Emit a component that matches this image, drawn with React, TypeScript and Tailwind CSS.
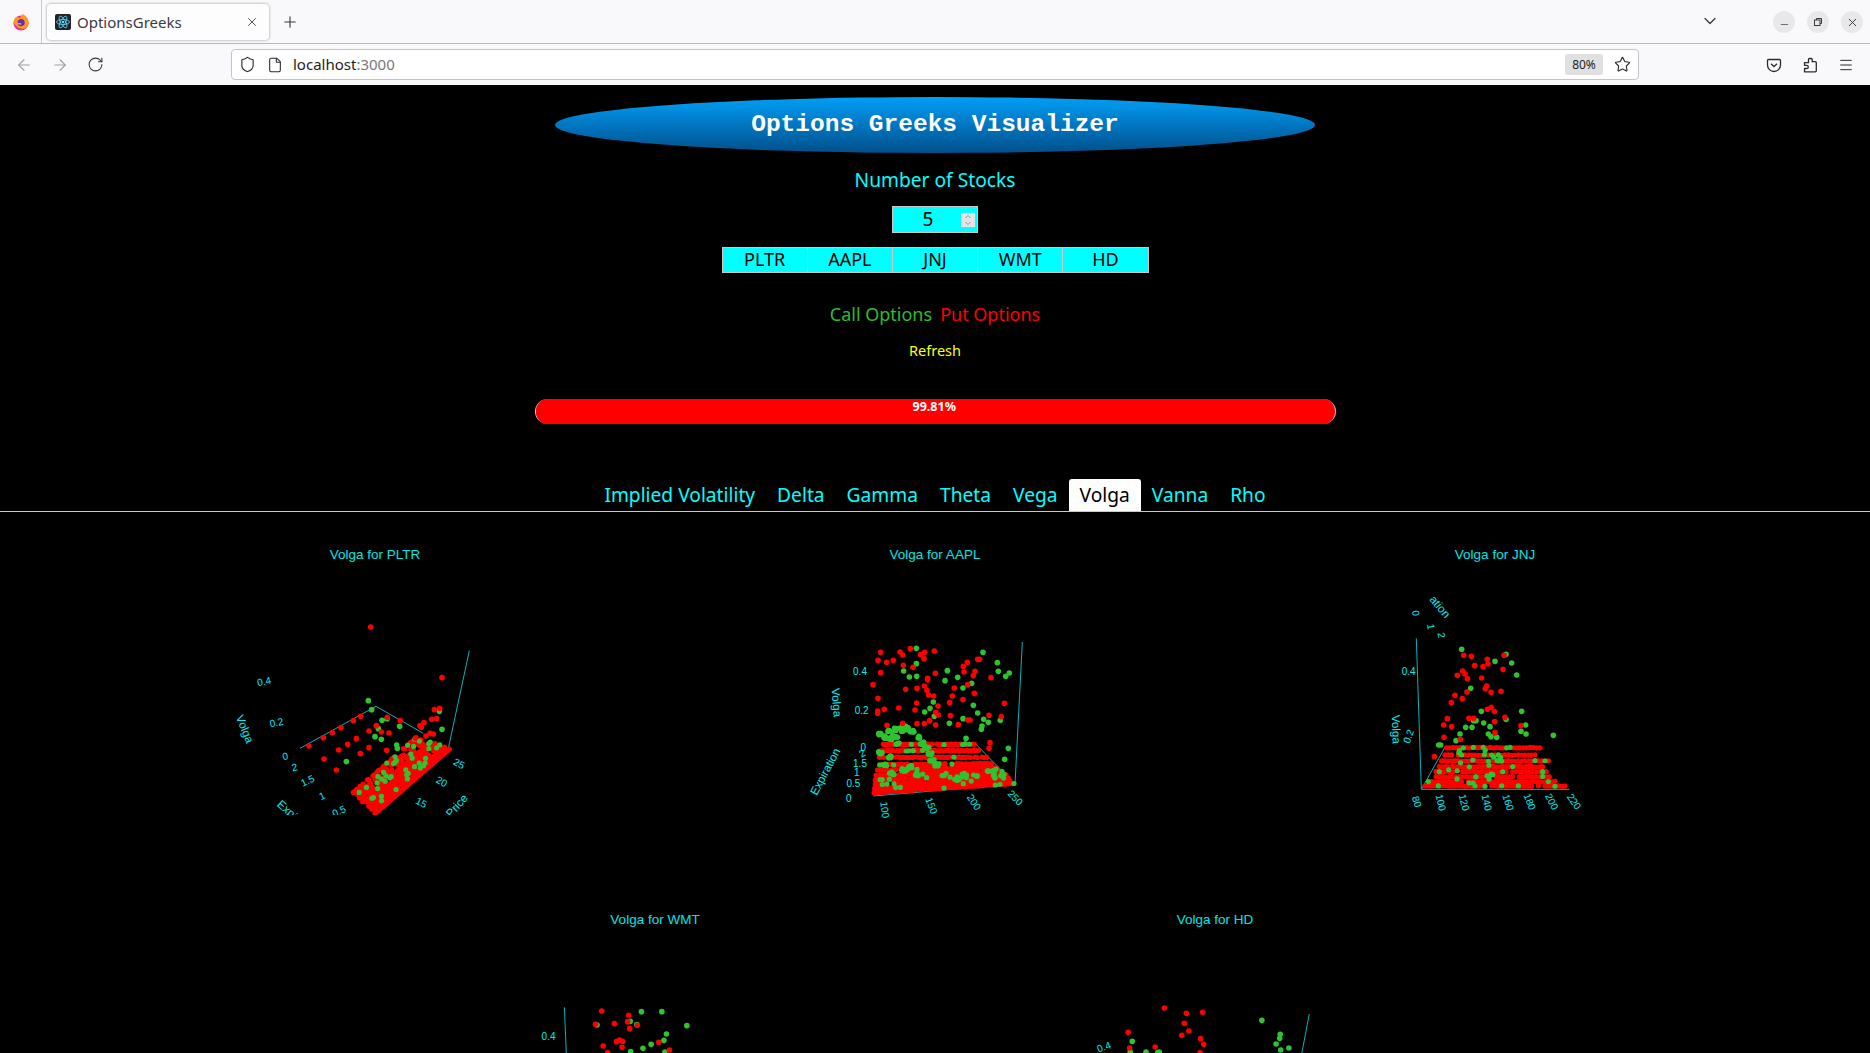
import React from "react";
import {
  ArrowLeft,
  ArrowRight,
  ChevronDown,
  File,
  Menu,
  Minus,
  Plus,
  RotateCw,
  Shield,
  Star,
  X,
} from "lucide-react";

type Pt = [number, number];
type Label = { text: string; x: number; y: number; r?: number; size?: number };

interface ChartDef {
  title: string;
  ox: number;
  oy: number;
  sx: number;
  sy: number;
  clipY?: number;
  lines: Pt[][];
  labels: Label[];
  under: { red: Pt[]; green: Pt[] };
  red: Pt[];
  green: Pt[];
}

const RED = "#ff0000";
const GREEN = "#2fc42f";
const AXIS = "#0bb0b5";
const PROGRESS = 99.81;

const mulberry = (seed: number) => () => {
  seed |= 0;
  seed = (seed + 0x6d2b79f5) | 0;
  let t = Math.imul(seed ^ (seed >>> 15), 1 | seed);
  t = (t + Math.imul(t ^ (t >>> 7), 61 | t)) ^ t;
  return ((t ^ (t >>> 14)) >>> 0) / 4294967296;
};

// diagonal rows for the PLTR cloud
const pltrCloud = () => {
  const rnd = mulberry(7);
  const red: Pt[] = [];
  const green: Pt[] = [];
  for (let k = 0; k <= 7; k++) {
    for (let t = 0; t <= 1; t += 0.022) {
      if (k > 0 && rnd() < 0.08 + k * 0.05) continue;
      const dx = (-65 - 35 * t) * (k / 7);
      const dy = (-60 + 30 * t) * (k / 7);
      const p: Pt = [465 + 225 * t + dx, 610 - 195 * t + dy - rnd() * (k ? 4 : 0)];
      if (k > 0 && rnd() < 0.1 + 0.14 * t) green.push(p);
      else red.push(p);
    }
  }
  return { red, green };
};

// rows are [y at x0, x0, x1, slope]
const rowCloud = (seed: number, rows: number[][], greenShare: number, step: number) => {
  const rnd = mulberry(seed);
  const red: Pt[] = [];
  const green: Pt[] = [];
  rows.forEach(([y, x0, x1, slope = 0]) => {
    for (let x = x0; x <= x1; x += step) {
      if (rnd() < 0.06) continue;
      const p: Pt = [x, y + (x - x0) * slope + (rnd() - 0.5) * 2];
      if (rnd() < greenShare) green.push(p);
      else red.push(p);
    }
  });
  return { red, green };
};

const aaplCloud = () => {
  const base = rowCloud(
    11,
    [
      [488, 252, 672, -0.066],
      [476, 254, 664, -0.058],
      [464, 256, 655, -0.05],
      [450, 256, 648, -0.04],
      [436, 258, 638, -0.03],
      [420, 262, 625, -0.02],
      [404, 262, 605, -0.01],
      [382, 268, 590, 0],
      [362, 272, 572, 0],
      [343, 280, 556, 0],
    ],
    0.06,
    7,
  );
  const rnd = mulberry(3);
  const arc: Pt[] = [
    [270, 314], [285, 322], [300, 326], [318, 320], [335, 300], [350, 296], [366, 304], [382, 320],
    [396, 340], [410, 352], [420, 372], [426, 392], [440, 405], [300, 304], [320, 297], [342, 292],
    [270, 368], [300, 380], [322, 340], [340, 420], [360, 410], [380, 435], [305, 430], [285, 405],
  ];
  arc.forEach(([x, y]) => {
    for (let i = 0; i < 6; i++) base.green.push([x + (rnd() - 0.5) * 14, y + (rnd() - 0.5) * 9]);
  });
  for (let i = 0; i < 16; i++) base.green.push([590 + rnd() * 55, 412 + rnd() * 32]);
  for (let i = 0; i < 14; i++) base.green.push([450 + rnd() * 130, 430 + rnd() * 25]);
  return base;
};

const jnjCloud = () => {
  const base = rowCloud(
    21,
    [
      [588, 135, 558],
      [575, 145, 530],
      [560, 158, 515],
      [545, 168, 505],
      [530, 178, 495],
      [513, 185, 510],
      [495, 195, 470],
      [473, 200, 480],
    ],
    0.13,
    10,
  );
  const rnd = mulberry(5);
  for (let i = 0; i < 22; i++) base.green.push([190 + rnd() * 190, 480 + rnd() * 100]);
  return base;
};

const charts: ChartDef[] = [
  {
    title: "Volga for PLTR",
    ox: 220,
    oy: 610,
    sx: 3,
    sy: 3,
    clipY: 815,
    lines: [
      [[240, 415], [468, 289], [610, 370]],
      [[685, 415], [748, 122]],
    ],
    labels: [
      { text: "0.4", x: 133, y: 217, r: -12 },
      { text: "0.2", x: 170, y: 340, r: -12 },
      { text: "Volga", x: 72, y: 358, r: 68, size: 11.5 },
      { text: "0", x: 196, y: 441, r: -12 },
      { text: "2", x: 224, y: 474, r: -12 },
      { text: "1.5", x: 264, y: 514, r: -25 },
      { text: "1", x: 307, y: 560, r: -25 },
      { text: "0.5", x: 358, y: 606, r: -25 },
      { text: "Expiration", x: 232, y: 630, r: 42, size: 11.5 },
      { text: "25", x: 716, y: 463, r: 28 },
      { text: "20", x: 664, y: 517, r: 28 },
      { text: "15", x: 603, y: 580, r: 28 },
      { text: "Strike Price", x: 680, y: 625, r: -48, size: 11.5 },
    ],
    under: pltrCloud(),
    red: [
      [452, 51], [666, 203], [267, 408], [310, 383], [337, 368], [363, 353], [400, 332], [422, 319], [502, 322],
      [541, 332], [469, 347], [484, 366], [507, 369], [447, 363], [409, 386], [383, 403], [356, 420], [312, 447],
      [349, 480], [421, 431], [447, 413], [500, 421], [643, 299], [659, 295], [635, 328], [650, 326], [612, 338],
      [600, 347], [604, 352], [586, 385], [618, 378], [630, 370], [640, 372],
    ],
    green: [
      [445, 272], [455, 299], [486, 331], [501, 327], [475, 356], [465, 380], [484, 388], [539, 349], [666, 358],
      [658, 304], [379, 455], [530, 405], [532, 415],
    ],
  },
  {
    title: "Volga for AAPL",
    ox: 790,
    oy: 630,
    sx: 3,
    sy: 3,
    lines: [
      [[250, 498], [675, 462], [555, 340]],
      [[675, 462], [697, 36]],
    ],
    labels: [
      { text: "0.4", x: 210, y: 128 },
      { text: "0.2", x: 215, y: 244 },
      { text: "Volga", x: 137, y: 218, r: 85, size: 11.5 },
      { text: "0", x: 220, y: 355 },
      { text: "2", x: 218, y: 372, r: -30 },
      { text: "1.5", x: 210, y: 402 },
      { text: "1", x: 200, y: 431 },
      { text: "0.5", x: 190, y: 464 },
      { text: "0", x: 176, y: 507 },
      { text: "Expiration", x: 108, y: 426, r: -62, size: 11.5 },
      { text: "100", x: 282, y: 540, r: 82 },
      { text: "150", x: 422, y: 528, r: 70 },
      { text: "200", x: 550, y: 518, r: 55 },
      { text: "250", x: 674, y: 505, r: 45 },
    ],
    under: aaplCloud(),
    red: [
      [272, 67], [330, 66], [338, 75], [361, 56], [392, 74], [404, 67], [433, 63], [402, 86], [264, 91], [290, 97],
      [310, 91], [340, 106], [369, 112], [272, 128], [249, 164], [347, 178], [381, 175], [403, 168], [411, 181],
      [416, 195], [413, 145], [413, 150], [436, 130], [264, 205], [380, 219], [431, 198], [444, 228], [263, 243],
      [263, 250], [283, 238], [326, 234], [375, 240], [437, 247], [445, 255], [419, 272], [403, 281], [437, 285],
      [291, 286], [338, 280], [381, 281], [505, 284], [481, 257], [533, 270], [540, 270], [479, 218], [487, 198],
      [493, 174], [533, 164], [553, 190], [519, 209], [643, 220], [597, 256], [634, 260], [532, 97], [520, 109],
      [522, 126], [555, 124], [550, 137], [563, 88], [569, 88], [603, 143], [600, 338], [597, 355],
    ],
    green: [
      [379, 55], [579, 67], [622, 98], [625, 124], [658, 129], [647, 139], [379, 101], [341, 123], [358, 141],
      [380, 139], [472, 122], [465, 152], [503, 142], [545, 160], [519, 174], [550, 226], [430, 216], [420, 235],
      [404, 246], [433, 259], [519, 266], [478, 280], [563, 249], [581, 268], [595, 277], [631, 271], [576, 288],
      [574, 298], [655, 355], [644, 388], [528, 325], [525, 342],
    ],
  },
  {
    title: "Volga for JNJ",
    ox: 1380,
    oy: 590,
    sx: 3,
    sy: 3,
    lines: [
      [[568, 598], [124, 598], [195, 472], [480, 472]],
      [[124, 598], [109, 145]],
    ],
    labels: [
      { text: "0", x: 105, y: 70, r: 80 },
      { text: "1", x: 150, y: 110, r: 80 },
      { text: "2", x: 182, y: 136, r: 80 },
      { text: "ation", x: 178, y: 52, r: 50, size: 11.5 },
      { text: "0.4", x: 86, y: 246 },
      { text: "0.2", x: 88, y: 440, r: -70 },
      { text: "Volga", x: 46, y: 418, r: 88, size: 11.5 },
      { text: "80", x: 108, y: 636, r: 72 },
      { text: "100", x: 180, y: 638, r: 76 },
      { text: "120", x: 250, y: 638, r: 76 },
      { text: "140", x: 318, y: 638, r: 76 },
      { text: "160", x: 382, y: 638, r: 72 },
      { text: "180", x: 447, y: 636, r: 68 },
      { text: "200", x: 513, y: 636, r: 62 },
      { text: "220", x: 580, y: 636, r: 55 },
    ],
    under: jnjCloud(),
    red: [
      [251, 196], [274, 199], [322, 208], [324, 222], [309, 230], [284, 227], [372, 196], [369, 238], [248, 243],
      [255, 252], [232, 256], [262, 266], [305, 264], [320, 288], [316, 296], [333, 307], [363, 304], [261, 306],
      [225, 316], [247, 326], [214, 338], [334, 352], [322, 358], [343, 364], [202, 386], [267, 385], [281, 385],
      [375, 382], [191, 405], [215, 410], [344, 395], [423, 407], [192, 442], [241, 448], [345, 428], [163, 500],
    ],
    green: [
      [245, 178], [378, 193], [345, 214], [395, 219], [410, 255], [272, 295], [304, 364], [425, 364], [378, 388],
      [437, 405], [423, 424], [438, 432], [520, 436], [281, 392], [288, 392], [276, 412], [257, 412], [311, 399],
      [330, 410], [325, 432], [240, 432], [228, 452], [176, 465], [182, 465], [333, 440], [350, 442],
    ],
  },
  {
    title: "Volga for WMT",
    ox: 520,
    oy: 900,
    sx: 1.96,
    sy: 3,
    lines: [[[87, 322], [91, 470]]],
    labels: [{ text: "0.4", x: 56, y: 413 }],
    under: { red: [], green: [] },
    red: [
      [160, 333], [213, 346], [148, 373], [185, 371], [211, 365], [230, 376], [215, 386], [195, 420], [189, 425],
      [201, 424], [163, 438], [200, 442], [272, 427], [293, 450], [172, 458],
    ],
    green: [
      [238, 335], [278, 335], [216, 364], [229, 374], [151, 375], [327, 377], [287, 402], [282, 421], [257, 433],
      [241, 445], [217, 455], [284, 456],
    ],
  },
  {
    title: "Volga for HD",
    ox: 520,
    oy: 900,
    sx: 1.96,
    sy: 3,
    lines: [[[1547, 342], [1531, 470]]],
    labels: [{ text: "0.4", x: 1145, y: 443, r: -20 }],
    under: { red: [], green: [] },
    red: [
      [1263, 324], [1306, 340], [1338, 337], [1302, 370], [1192, 397], [1311, 393], [1297, 406], [1334, 416],
      [1340, 433], [1195, 444], [1245, 441], [1333, 458],
    ],
    green: [
      [1454, 361], [1200, 424], [1490, 403], [1489, 415], [1482, 432], [1507, 444], [1491, 450], [1196, 456],
      [1227, 456], [1253, 456], [1250, 458],
    ],
  },
];

// top left corner of each card on the page, used to place the traced points
const cardOrigins: Pt[] = [
  [95, 535],
  [655, 535],
  [1215, 535],
  [375, 900],
  [935, 900],
];

const Dots: React.FC<{ pts: Pt[]; fill: string; map: (p: Pt) => Pt; r: number }> = ({ pts, fill, map, r }) => (
  <g fill={fill}>
    {pts.map((p, i) => {
      const [cx, cy] = map(p);
      return <circle key={i} cx={cx} cy={cy} r={r} />;
    })}
  </g>
);

const Chart: React.FC<{ chart: ChartDef; origin: Pt; index: number }> = ({ chart, origin, index }) => {
  const map = ([x, y]: Pt): Pt => [chart.ox + x / chart.sx - origin[0], chart.oy + y / chart.sy - origin[1]];
  const clipId = `plot-clip-${index}`;
  return (
    <div className="h-[365px] w-[560px] shrink-0">
      <svg width={560} height={365} className="block">
        <defs>
          <clipPath id={clipId}>
            <rect x={0} y={0} width={560} height={chart.clipY ? chart.clipY - origin[1] : 365} />
          </clipPath>
        </defs>
        <text
          x={280}
          y={24}
          textAnchor="middle"
          fill="#00e5e5"
          fontSize={13.5}
          fontFamily="'Liberation Sans', sans-serif"
        >
          {chart.title}
        </text>
        <g clipPath={`url(#${clipId})`}>
          {chart.lines.map((line, i) => (
            <polyline
              key={i}
              points={line.map((p) => map(p).join(",")).join(" ")}
              fill="none"
              stroke={AXIS}
              strokeWidth={1}
            />
          ))}
          {chart.labels.map((l, i) => {
            const [x, y] = map([l.x, l.y]);
            return (
              <text
                key={i}
                x={x}
                y={y}
                textAnchor="middle"
                dominantBaseline="middle"
                fill="#00f0f0"
                fontSize={l.size ?? 10}
                fontFamily="'Liberation Sans', sans-serif"
                transform={l.r ? `rotate(${l.r} ${x} ${y})` : undefined}
              >
                {l.text}
              </text>
            );
          })}
          <Dots pts={chart.under.red} fill={RED} map={map} r={2.6} />
          <Dots pts={chart.under.green} fill={GREEN} map={map} r={2.6} />
          <Dots pts={chart.green} fill={GREEN} map={map} r={2.8} />
          <Dots pts={chart.red} fill={RED} map={map} r={2.8} />
        </g>
      </svg>
    </div>
  );
};

const FirefoxLogo = () => (
  <svg width="18" height="18" viewBox="0 0 18 18">
    <circle cx="9" cy="10" r="7.6" fill="#e0399a" />
    <path d="M1.6 9.5C2 5 5 3 6.5 3 6 4 6.2 5 7 5.5 8.5 4 10 3 10.5 1c3.5 1.6 6.2 4.6 6.2 8.6 0 2-1 4-2.6 5.4-2 1.2-7 1-9-1.5C3 12 2 11 1.6 9.5z" fill="#ff9a1f" />
    <path d="M5.5 9.5c0-2 1.6-3.4 3.6-3.4 2.2 0 3.7 1.6 3.7 3.6s-1.6 3.6-3.7 3.6c-1.6 0-3-.9-3.4-2.3 1 .8 2.6 1 3.4.4.6-.5.3-1.2-.4-1.3-1-.1-2 .2-3.2-.6z" fill="#6a2bc4" />
  </svg>
);

const ReactFavicon = () => (
  <svg width="16" height="16" viewBox="0 0 16 16" className="shrink-0">
    <rect width="16" height="16" rx="2" fill="#20232a" />
    <g fill="none" stroke="#61dafb" strokeWidth="0.8">
      <ellipse cx="8" cy="8" rx="6.5" ry="2.5" />
      <ellipse cx="8" cy="8" rx="6.5" ry="2.5" transform="rotate(60 8 8)" />
      <ellipse cx="8" cy="8" rx="6.5" ry="2.5" transform="rotate(120 8 8)" />
    </g>
    <circle cx="8" cy="8" r="1.3" fill="#61dafb" />
  </svg>
);

const WindowButton: React.FC<{ children: React.ReactNode }> = ({ children }) => (
  <div className="flex h-[22px] w-[22px] items-center justify-center rounded-full bg-[#e8e8ea] text-[#3a3a3c]">
    {children}
  </div>
);

const TabBar = () => (
  <div className="flex h-[44px] shrink-0 items-start border-b border-[#b8b8ba] bg-[#f9f9fb]">
    <div className="flex h-[43px] w-[42px] items-center justify-center border-r border-[#c8c8ca]">
      <FirefoxLogo />
    </div>
    <div className="mt-[4px] ml-[5px] flex h-[36px] w-[222px] items-center rounded-[4px] bg-[#fdfdfd] pr-[10px] pl-[8px] shadow-[0_0_3px_rgba(0,0,0,0.4)]">
      <ReactFavicon />
      <span className="ml-[6px] flex-1 text-[15px] text-[#3a3a44] [font-family:'Noto_Sans',sans-serif]">OptionsGreeks</span>
      <X size={14} strokeWidth={1.5} className="text-[#3a3a44]" />
    </div>
    <div className="mt-[13px] ml-[12px]">
      <Plus size={18} strokeWidth={1.5} className="text-[#3a3a44]" />
    </div>
    <div className="mt-[11px] ml-auto">
      <ChevronDown size={20} strokeWidth={1.5} className="text-[#3a3a44]" />
    </div>
    <div className="mt-[11px] mr-[7px] ml-[53px] flex gap-[12px]">
      <WindowButton>
        <Minus size={11} strokeWidth={1.5} className="mt-[5px]" />
      </WindowButton>
      <WindowButton>
        <svg width="10" height="10" viewBox="0 0 10 10" fill="none" stroke="currentColor" strokeWidth="1">
          <rect x="1.5" y="3" width="5.5" height="5.5" />
          <path d="M3.5 3V1.5H8.5V6.5H7" />
        </svg>
      </WindowButton>
      <WindowButton>
        <X size={13} strokeWidth={1.8} />
      </WindowButton>
    </div>
  </div>
);

const Toolbar = () => (
  <div className="flex h-[41px] shrink-0 items-center bg-[#f9f9fb]">
    <div className="flex items-center gap-[18px] pl-[15px]">
      <ArrowLeft size={18} strokeWidth={1.5} className="text-[#a0a0a6]" />
      <ArrowRight size={18} strokeWidth={1.5} className="text-[#a0a0a6]" />
      <RotateCw size={17} strokeWidth={1.5} className="text-[#3a3a44]" />
    </div>
    <div className="ml-[127px] flex h-[31px] w-[1408px] items-center rounded-[4px] border border-[#c4c4c6] bg-white pr-[7px] pl-[7px]">
      <Shield size={17} strokeWidth={1.6} className="text-[#2b2b33]" />
      <File size={16} strokeWidth={1.6} className="ml-[11px] text-[#2b2b33]" />
      <span className="ml-[10px] flex-1 text-[15px] text-[#1d1d22] [font-family:'Noto_Sans',sans-serif]">
        localhost<span className="text-[#77777d]">:3000</span>
      </span>
      <span className="flex h-[21px] w-[38px] items-center justify-center rounded-[3px] bg-[#e0e0e2] text-[12px] text-[#1d1d22] [font-family:'Noto_Sans',sans-serif]">
        80%
      </span>
      <Star size={17} strokeWidth={1.6} className="ml-[11px] text-[#2b2b33]" />
    </div>
    <div className="ml-auto flex items-center gap-[20px] pr-[16px]">
      <svg width="16" height="16" viewBox="0 0 16 16" fill="none" stroke="#2b2b33" strokeWidth="1.3">
        <path d="M2.5 2.5h11a1 1 0 0 1 1 1V8a6.5 6.5 0 0 1-13 0V3.5a1 1 0 0 1 1-1z" />
        <path d="M5 6.8l3 2.8 3-2.8" />
      </svg>
      <svg width="16" height="16" viewBox="0 0 16 16" fill="none" stroke="#2b2b33" strokeWidth="1.3" strokeLinejoin="round">
        <path d="M7.5 1.5h1.7a1 1 0 0 1 1 1v2.2h3.1a1 1 0 0 1 1 1v8.1a1 1 0 0 1-1 1H2.5V11.5h2.2a1.6 1.6 0 0 0 0-3.2H2.5V5.7h4V2.5a1 1 0 0 1 1-1z" />
      </svg>
      <Menu size={16} strokeWidth={1.5} className="text-[#2b2b33]" />
    </div>
  </div>
);

const Spinner = () => (
  <div className="flex h-[14px] w-[14px] flex-col items-center justify-center bg-[#e4e4e6] text-[#8a8a8e]">
    <svg width="8" height="12" viewBox="0 0 8 12" fill="none" stroke="currentColor" strokeWidth="0.9">
      <path d="M1.5 4L4 1.5 6.5 4M1.5 8L4 10.5 6.5 8" />
    </svg>
  </div>
);

const stocks = ["PLTR", "AAPL", "JNJ", "WMT", "HD"];
const tabs = ["Implied Volatility", "Delta", "Gamma", "Theta", "Vega", "Volga", "Vanna", "Rho"];

export default function App() {
  return (
    <div className="flex h-[1053px] w-[1870px] flex-col overflow-hidden bg-black [font-family:'Noto_Sans',sans-serif]">
      <TabBar />
      <Toolbar />
      <div className="flex min-h-0 flex-1 flex-col items-center overflow-hidden">
        <div className="mt-[12px] flex h-[56px] w-[760px] shrink-0 items-center justify-center rounded-[50%] bg-gradient-to-b from-[#009ff8] to-[#00508c]">
          <h1 className="text-[24.5px] font-bold text-white [font-family:'Liberation_Mono',monospace]">
            Options Greeks Visualizer
          </h1>
        </div>
        <div className="mt-[13px] flex h-[28px] shrink-0 items-center text-[19.2px] text-[#00ffff]">Number of Stocks</div>
        <div className="mt-[12px] flex h-[27px] w-[86px] shrink-0 items-center border border-[#c8c8c8] bg-[#00ffff] pr-[2px]">
          <span className="flex-1 pl-[2px] text-center text-[19px] text-black">5</span>
          <Spinner />
        </div>
        <div className="mt-[14px] flex h-[26px] w-[427px] shrink-0 border border-[#c8c8c8] bg-[#00ffff]">
          {stocks.map((s, i) => (
            <div
              key={s}
              className={`flex flex-1 items-center justify-center pb-[2px] text-[18px] text-black ${i ? "border-l border-[#c8c8c8]" : ""}`}
            >
              {s}
            </div>
          ))}
        </div>
        <div className="mt-[27px] flex h-[28px] shrink-0 items-center gap-[8px] text-[18px]">
          <span className="text-[#2dbd2d]">Call Options</span>
          <span className="text-[#ff0000]">Put Options</span>
        </div>
        <div className="mt-[12px] flex h-[22px] shrink-0 items-center text-[14.5px] text-[#ffff00]">Refresh</div>
        <div className="mt-[37px] h-[25px] w-[801px] shrink-0 overflow-hidden rounded-full border-x border-[#d0d0d0] bg-[#ff0000]">
          <div
            className="h-full bg-[#ff0000] text-center text-[12.5px] leading-[15px] font-bold text-white"
            style={{ width: `${PROGRESS}%` }}
          >
            {PROGRESS}%
          </div>
        </div>
        <div className="mt-[55px] flex h-[33px] w-full shrink-0 justify-center border-b border-[#c8c8c8]">
          {tabs.map((t) => (
            <div
              key={t}
              className={`flex h-[32px] items-center px-[11px] text-[19.2px] ${
                t === "Volga" ? "rounded-t-[3px] bg-white text-black" : "text-[#00ffff]"
              }`}
            >
              {t}
            </div>
          ))}
        </div>
        <div className="mt-[23px] flex w-[1680px] shrink-0 flex-wrap justify-center">
          {charts.map((c, i) => (
            <Chart key={c.title} chart={c} origin={cardOrigins[i]} index={i} />
          ))}
        </div>
      </div>
    </div>
  );
}
